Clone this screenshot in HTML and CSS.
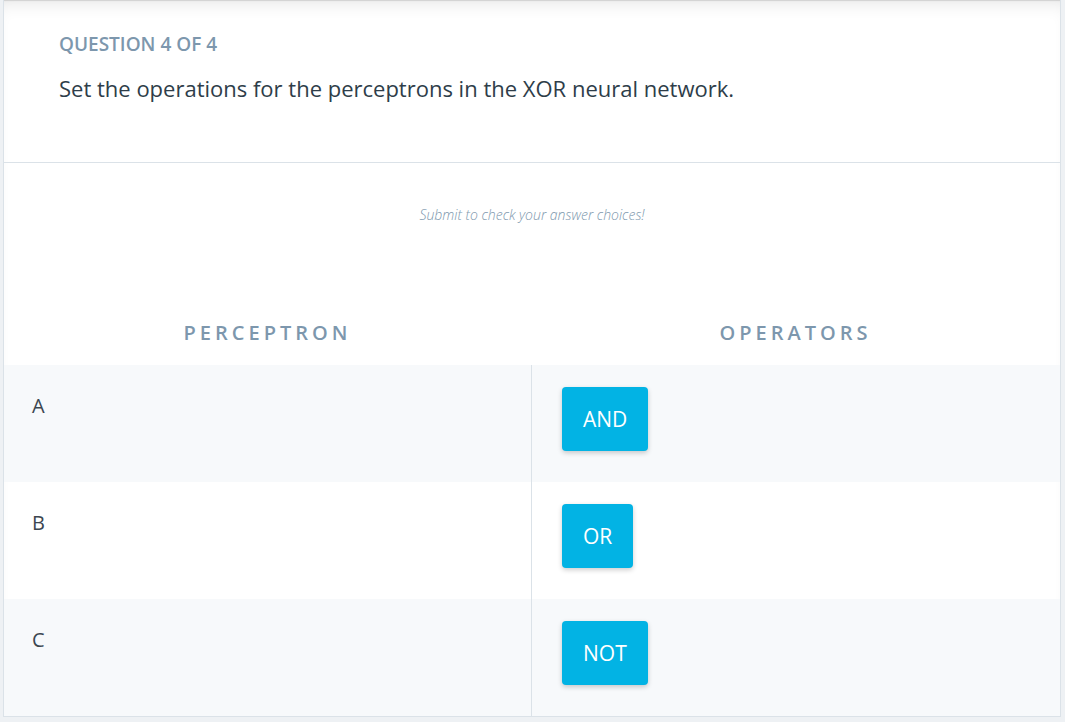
FILE: index.html
```html
<!DOCTYPE html>
<html>
<head>
<meta charset="utf-8">
<link rel="stylesheet" href="styles.css">
</head>
<body>
<div class="card">
  <header class="question">
    <div class="q-label">QUESTION 4 OF 4</div>
    <div class="q-title">Set the operations for the perceptrons in the XOR neural network.</div>
  </header>
  <section class="quiz">
    <p class="hint">Submit to check your answer choices!</p>
    <div class="table">
      <div class="th">PERCEPTRON</div>
      <div class="th">OPERATORS</div>
      <div class="cell name shade">A</div>
      <div class="cell op shade"><button class="chip">AND</button></div>
      <div class="cell name">B</div>
      <div class="cell op"><button class="chip">OR</button></div>
      <div class="cell name shade">C</div>
      <div class="cell op shade"><button class="chip">NOT</button></div>
    </div>
  </section>
</div>
</body>
</html>
```
FILE: styles.css
```css
html, body {
  margin: 0;
  padding: 0;
}
body {
  background: #eef1f4;
  font-family: "Open Sans", "Liberation Sans", sans-serif;
  width: 1065px;
  height: 722px;
  overflow: hidden;
}
.card {
  margin: 0 4px 0 3px;
  height: 717px;
  box-sizing: border-box;
  background: #ffffff;
  border: 1px solid #dbe2e8;
  border-top: none;
  box-shadow: inset 0 14px 20px -14px rgba(0, 0, 0, 0.14), inset 0 2px 1px -1px rgba(0, 0, 0, 0.12);
  display: flex;
  flex-direction: column;
}
.question {
  padding: 32px 0 0 55px;
  height: 163px;
  box-sizing: border-box;
  border-bottom: 1px solid #dbe2e8;
}
.q-label {
  font-size: 19px;
  font-weight: 600;
  line-height: 24px;
  color: #7d97ad;
}
.q-title {
  margin-top: 17px;
  font-size: 22px;
  line-height: 30px;
  color: #2e3d49;
}
.quiz {
  flex: 1;
  display: flex;
  flex-direction: column;
}
.hint {
  margin: 42px 0 0;
  text-align: center;
  font-size: 14px;
  line-height: 20px;
  font-style: italic;
  font-weight: 300;
  color: #7d97ad;
}
.table {
  margin-top: 96px;
  display: grid;
  grid-template-columns: 527px 1fr;
  grid-template-rows: 44px 117px 117px 117px;
}
.th {
  text-align: center;
  font-size: 20px;
  font-weight: 600;
  letter-spacing: 4px;
  line-height: 24px;
  color: #7d97ad;
}
.cell {
  box-sizing: border-box;
}
.shade {
  background: #f7f9fb;
}
.name {
  padding: 29px 0 0 28px;
  font-size: 20px;
  line-height: 24px;
  color: #3c4650;
}
.op {
  border-left: 1px solid #dbe2e8;
  padding: 22px 0 0 30px;
}
.chip {
  height: 64px;
  padding: 0 21px;
  border: none;
  border-radius: 4px;
  background: #02b3e4;
  color: #ffffff;
  font-family: "Open Sans", "Liberation Sans", sans-serif;
  font-size: 21px;
  box-shadow: 0 2px 5px rgba(0, 0, 0, 0.2);
  cursor: pointer;
}
```
